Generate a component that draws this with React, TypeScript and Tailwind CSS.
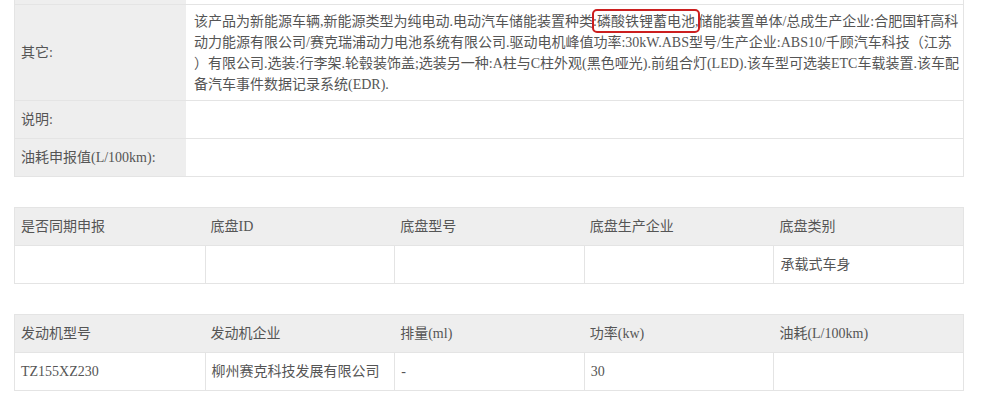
const font = "font-['Liberation_Serif','Noto_Sans_CJK_SC',serif]";

const chassisHead = ['是否同期申报', '底盘ID', '底盘型号', '底盘生产企业', '底盘类别'];
const chassisRow = ['', '', '', '', '承载式车身'];
const engineHead = ['发动机型号', '发动机企业', '排量(ml)', '功率(kw)', '油耗(L/100km)'];
const engineRow = ['TZ155XZ230', '柳州赛克科技发展有限公司', '-', '30', ''];

const GridTable = ({ head, row }: { head: string[]; row: string[] }) => (
  <div className="border border-[#e4e4e4]">
    <div className="grid grid-cols-5 h-[38px] bg-[#eeeeee] border-b border-[#e4e4e4]">
      {head.map((h, i) => (
        <div key={i} className="flex items-center px-[6px]">
          {h}
        </div>
      ))}
    </div>
    <div className="grid grid-cols-5 h-[37px]">
      {row.map((c, i) => (
        <div
          key={i}
          className={`flex items-center px-[6px] ${i > 0 ? 'border-l border-[#e4e4e4]' : ''}`}
        >
          {c}
        </div>
      ))}
    </div>
  </div>
);

export default function App() {
  return (
    <div className={`w-[986px] h-[411px] overflow-hidden bg-white text-[14px] text-[#555555] ${font}`}>
      <div className="ml-[14px] w-[950px]">
        {/* spec table, top row cut off */}
        <div className="border-x border-b border-[#e4e4e4]">
          <div className="flex h-[5px] border-b border-[#e4e4e4]">
            <div className="w-[171px] bg-[#eeeeee]" />
            <div className="flex-1" />
          </div>
          <div className="flex h-[96px] border-b border-[#e4e4e4]">
            <div className="w-[171px] bg-[#eeeeee] flex items-center px-[6px]">其它:</div>
            <div className="flex-1 pl-[8px] pt-[6px] leading-[21px] whitespace-nowrap">
              <div>
                该产品为新能源车辆,新能源类型为纯电动.电动汽车储能装置种类:
                <span className="relative">
                  磷酸铁锂蓄电池,
                  <span className="absolute -left-[5px] -right-[2px] -top-[5px] -bottom-[4px] border-[2.5px] border-[#cc1f1f] rounded-[5px]" />
                </span>
                储能装置单体/总成生产企业:合肥国轩高科
              </div>
              <div>
                动力能源有限公司/赛克瑞浦动力电池系统有限公司.驱动电机峰值功率:30kW.ABS型号/生产企业:ABS10/千顾汽车科技（江苏
              </div>
              <div>
                ）有限公司.选装:行李架.轮毂装饰盖;选装另一种:A柱与C柱外观(黑色哑光).前组合灯(LED).该车型可选装ETC车载装置.该车配
              </div>
              <div>备汽车事件数据记录系统(EDR).</div>
            </div>
          </div>
          <div className="flex h-[38px] border-b border-[#e4e4e4]">
            <div className="w-[171px] bg-[#eeeeee] flex items-center px-[6px]">说明:</div>
            <div className="flex-1" />
          </div>
          <div className="flex h-[37px]">
            <div className="w-[171px] bg-[#eeeeee] flex items-center px-[6px]">油耗申报值(L/100km):</div>
            <div className="flex-1" />
          </div>
        </div>

        <div className="mt-[30px]">
          <GridTable head={chassisHead} row={chassisRow} />
        </div>

        <div className="mt-[30px]">
          <GridTable head={engineHead} row={engineRow} />
        </div>
      </div>
    </div>
  );
}
